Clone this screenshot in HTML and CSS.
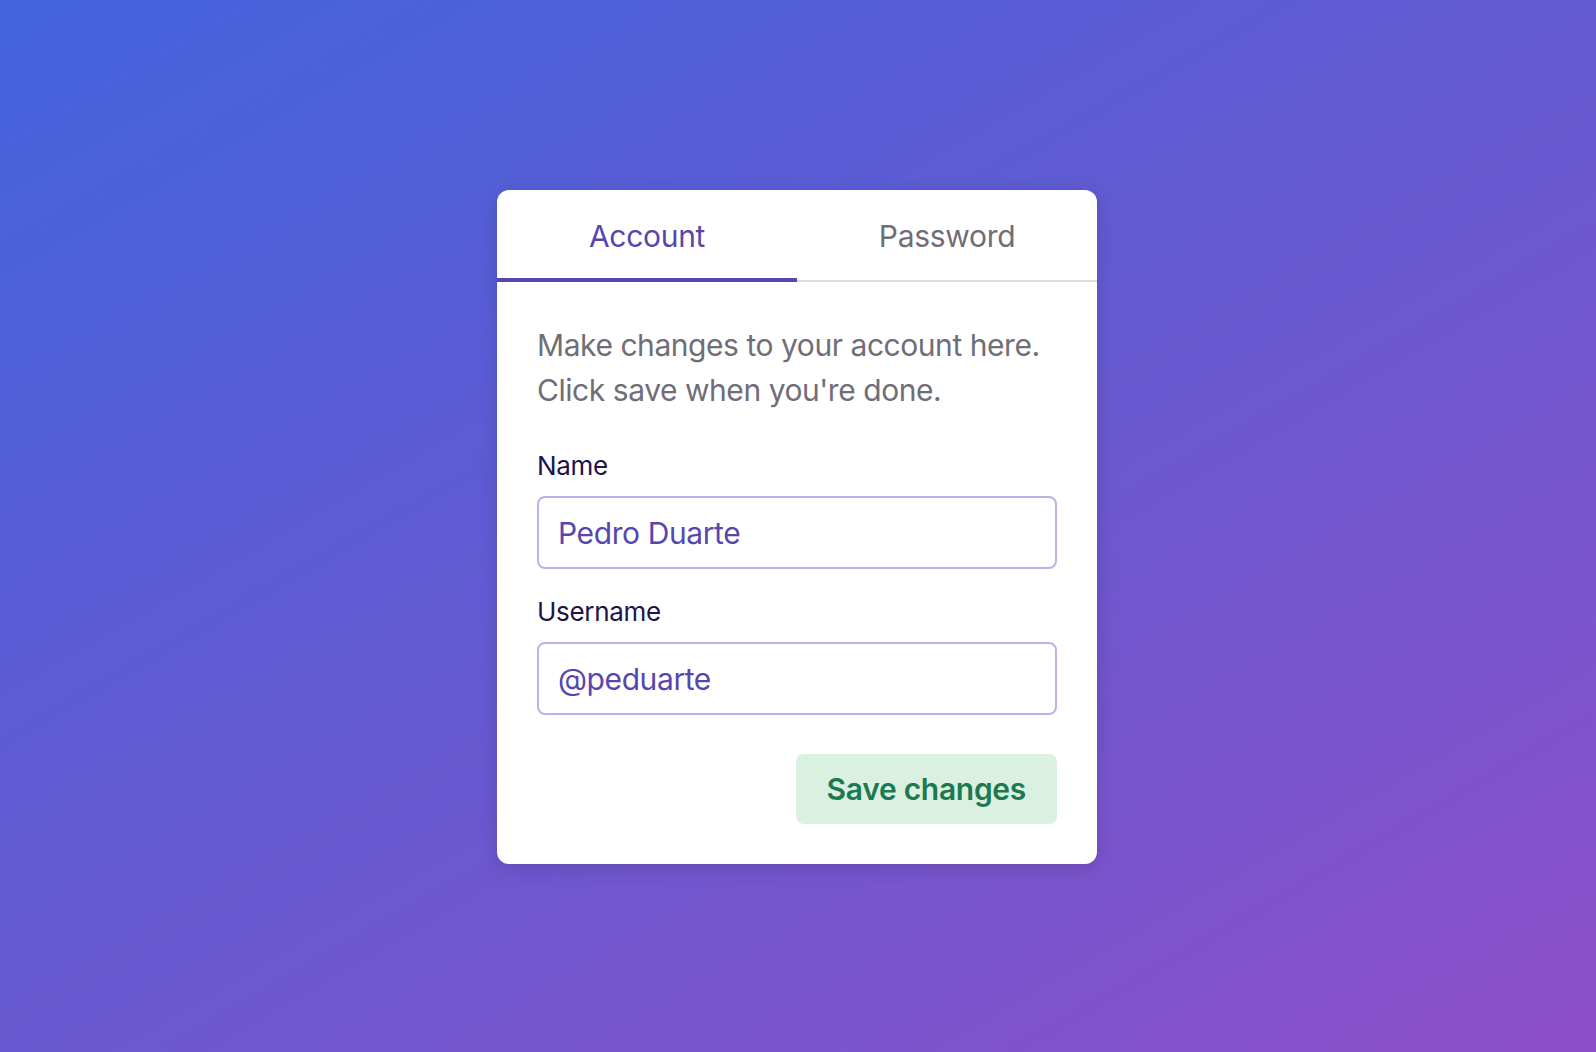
FILE: index.html
```html
<!DOCTYPE html>
<html lang="en">
<head>
<meta charset="utf-8">
<title>Tabs</title>
<link rel="stylesheet" href="styles.css">
</head>
<body>
<main class="stage">
  <section class="tabs">
    <div class="tab-list" role="tablist">
      <button class="tab tab-active" role="tab">Account</button>
      <button class="tab" role="tab">Password</button>
    </div>
    <div class="tab-content">
      <p class="desc">Make changes to your account here.<br>Click save when you're done.</p>
      <div class="field">
        <label class="label" for="name">Name</label>
        <input class="input" id="name" value="Pedro Duarte">
      </div>
      <div class="field">
        <label class="label" for="username">Username</label>
        <input class="input" id="username" value="@peduarte">
      </div>
      <div class="actions">
        <button class="save">Save changes</button>
      </div>
    </div>
  </section>
</main>
</body>
</html>
```
FILE: styles.css
```css
* { box-sizing: border-box; }
html, body { margin: 0; height: 100%; }
body {
  font-family: Inter, "Liberation Sans", sans-serif;
  background: linear-gradient(330deg, #8c4fc8 0%, #4264dc 100%);
}
.stage {
  height: 100%;
  display: flex;
  justify-content: center;
  padding-top: 190px;
  padding-right: 2px;
}
.tabs {
  width: 600px;
  align-self: flex-start;
  background: #fff;
  border-radius: 12px;
  box-shadow: 0 4px 20px rgba(0,0,0,0.14);
  overflow: hidden;
}
.tab-list {
  display: flex;
  border-bottom: 2px solid #dcdbdd;
}
.tab {
  flex: 1;
  height: 92px;
  margin-bottom: -2px;
  padding: 2px 40px 2px;
  border: 0;
  background: transparent;
  font-family: inherit;
  font-size: 30px;
  letter-spacing: -0.3px;
  color: #6f6e77;
}
.tab-active {
  color: #5746af;
  box-shadow: inset 0 -4px 0 0 #5a45b0;
}
.tab-content {
  padding: 41px 40px 40px;
}
.desc {
  margin: 0 0 40px;
  font-size: 30px;
  line-height: 45px;
  letter-spacing: -0.45px;
  color: #6f6e77;
}
.field {
  display: flex;
  flex-direction: column;
  margin-bottom: 30px;
}
.label {
  font-size: 26px;
  line-height: 26px;
  letter-spacing: -0.3px;
  color: #20134b;
  margin-bottom: 17px;
}
.input {
  height: 73px;
  border: 2px solid #bdb1ea;
  border-radius: 8px;
  padding: 0 19px;
  font-family: inherit;
  font-size: 30px;
  letter-spacing: -0.4px;
  color: #5746af;
  outline: none;
}
.actions {
  display: flex;
  justify-content: flex-end;
  margin-top: 39px;
}
.save {
  height: 70px;
  padding: 0 31px;
  border: 0;
  border-radius: 8px;
  background: #daf0e0;
  color: #1c7a50;
  font-family: inherit;
  font-size: 30px;
  font-weight: 600;
  letter-spacing: -0.3px;
}
```
